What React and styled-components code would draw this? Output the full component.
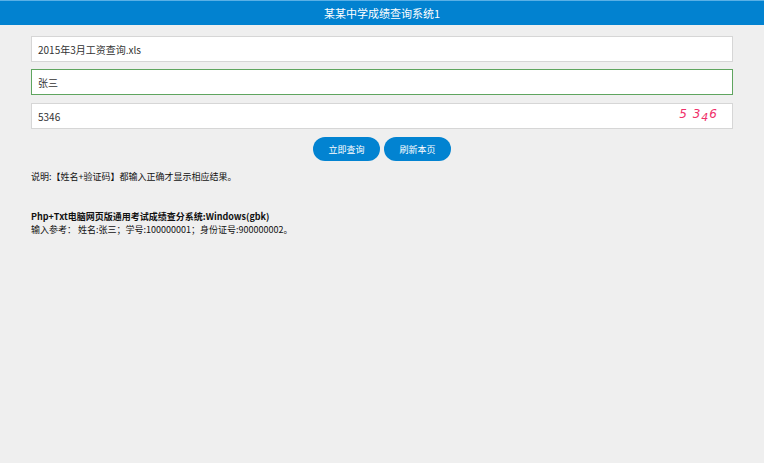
import React from "react";
import styled, { createGlobalStyle } from "styled-components";

const Global = createGlobalStyle`
  html,body{margin:0;background:#efefef;font-family:"Noto Sans CJK SC","Microsoft YaHei",sans-serif;}
`;
const Header = styled.div`
  height:25px;background:#0282d0;color:#fff;font-size:11px;
  display:flex;align-items:center;justify-content:center;border-top:1px solid #5ab0e6;box-sizing:border-box;
`;
const Main = styled.div`
  padding:11px 31px 0 31px;display:flex;flex-direction:column;
`;
const Field = styled.div`
  height:26px;box-sizing:border-box;background:#fff;border:1px solid ${p=>p.$active?"#5fa55f":"#d6d6d6"};
  margin-bottom:${p=>p.$mb}px;display:flex;align-items:center;justify-content:space-between;
  padding:0 6px;font-size:10px;color:#333;
`;
const Captcha = styled.span`
  color:#f0306a;font-size:12px;font-style:italic;letter-spacing:1px;margin-right:8px;font-family:"DejaVu Sans",sans-serif;
`;
const Buttons = styled.div`
  display:flex;justify-content:center;gap:4px;margin-top:8px;
`;
const Btn = styled.button`
  width:67px;height:24px;border:none;border-radius:12px;background:#0283d1;color:#fff;font-size:9px;font-family:inherit;padding:0;
`;
const Note = styled.div`
  font-size:9px;color:#111;margin-top:${p=>p.$mt||0}px;font-weight:${p=>p.$bold?700:400};line-height:13px;
`;

export default function App(){
  return <>
    <Global/>
    <Header>某某中学成绩查询系统1</Header>
    <Main>
      <Field $mb={7}>2015年3月工资查询.xls</Field>
      <Field $mb={8} $active>张三</Field>
      <Field $mb={0}>5346<Captcha>5 3<sub style={{fontSize:11}}>4</sub>6</Captcha></Field>
      <Buttons><Btn>立即查询</Btn><Btn>刷新本页</Btn></Buttons>
      <Note $mt={9}>说明:【姓名+验证码】都输入正确才显示相应结果。</Note>
      <Note $mt={27} $bold>Php+Txt电脑网页版通用考试成绩查分系统:Windows(gbk)</Note>
      <Note>输入参考： 姓名:张三；学号:100000001；身份证号:900000002。</Note>
    </Main>
  </>;
}
